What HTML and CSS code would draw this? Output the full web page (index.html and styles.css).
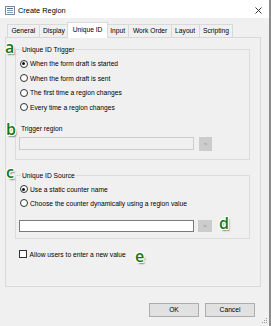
FILE: index.html
```html
<!DOCTYPE html>
<html>
<head>
<meta charset="utf-8">
<link rel="stylesheet" href="styles.css">
</head>
<body>
<div class="window">
  <div class="titlebar">
    <svg class="app-icon" width="10" height="9" viewBox="0 0 10 9">
      <rect x="0.5" y="0.5" width="9" height="8" fill="#fff" stroke="#7a8aa0"/>
      <line x1="2" y1="2.5" x2="8" y2="2.5" stroke="#4a6fa5"/>
      <line x1="2" y1="4.5" x2="8" y2="4.5" stroke="#8aa0c0"/>
      <line x1="2" y1="6.5" x2="8" y2="6.5" stroke="#8aa0c0"/>
    </svg>
    <span class="title">Create Region</span>
    <svg class="close" width="7" height="7" viewBox="0 0 7 7">
      <path d="M0.5 0.5 L6.5 6.5 M6.5 0.5 L0.5 6.5" stroke="#222" stroke-width="0.9" fill="none"/>
    </svg>
  </div>

  <div class="tabs">
    <div class="tab">General</div>
    <div class="tab">Display</div>
    <div class="tab active">Unique ID</div>
    <div class="tab">Input</div>
    <div class="tab">Work Order</div>
    <div class="tab">Layout</div>
    <div class="tab">Scripting</div>
  </div>

  <div class="panel">
    <div class="group group-trigger">
      <span class="legend">Unique ID Trigger</span>
      <div class="option"><span class="radio checked"></span>When the form draft is started</div>
      <div class="option"><span class="radio"></span>When the form draft is sent</div>
      <div class="option"><span class="radio"></span>The first time a region changes</div>
      <div class="option"><span class="radio"></span>Every time a region changes</div>
      <div class="field-label">Trigger region</div>
      <div class="field-row">
        <div class="textbox disabled"></div>
        <div class="pick">&gt;</div>
      </div>
    </div>

    <div class="group group-source">
      <span class="legend">Unique ID Source</span>
      <div class="option"><span class="radio checked"></span>Use a static counter name</div>
      <div class="option"><span class="radio"></span>Choose the counter dynamically using a region value</div>
      <div class="field-row source-row">
        <div class="textbox"></div>
        <div class="pick">&gt;</div>
      </div>
    </div>

    <div class="option check-row"><span class="checkbox"></span>Allow users to enter a new value</div>
  </div>

  <div class="footer">
    <div class="btn">OK</div>
    <div class="btn">Cancel</div>
  </div>

  <svg class="grip" width="6" height="6" viewBox="0 0 6 6">
    <rect x="4" y="0" width="1" height="1" fill="#999"/>
    <rect x="2" y="2" width="1" height="1" fill="#999"/>
    <rect x="4" y="2" width="1" height="1" fill="#999"/>
    <rect x="0" y="4" width="1" height="1" fill="#999"/>
    <rect x="2" y="4" width="1" height="1" fill="#999"/>
    <rect x="4" y="4" width="1" height="1" fill="#999"/>
  </svg>

  <span class="badge badge-a">a</span>
  <span class="badge badge-b">b</span>
  <span class="badge badge-c">c</span>
  <span class="badge badge-d">d</span>
  <span class="badge badge-e">e</span>
</div>
</body>
</html>
```

FILE: styles.css
```css
* { box-sizing: border-box; }
html, body { margin: 0; padding: 0; background: #f0f0f0; }
body { font-family: "Liberation Sans", Arial, sans-serif; font-size: 6.7px; color: #000; }

.window {
  position: relative;
  width: 271px;
  height: 326px;
  background: #f0f0f0;
  overflow: hidden;
  border-right: 2px solid #8c8c8c;
}

.titlebar {
  height: 18px;
  background: #fff;
  display: flex;
  align-items: center;
  padding-left: 5px;
  padding-right: 7px;
}
.app-icon { display: block; margin-top: 2px; }
.title { font-size: 7.4px; margin-left: 3px; margin-top: 2px; color: #000; }
.close { margin-left: auto; margin-top: 2px; }

.tabs {
  display: flex;
  align-items: flex-end;
  height: 15px;
  margin-top: 4px;
  padding-left: 7px;
  position: relative;
  z-index: 1;
}
.tab {
  height: 13px;
  padding: 0 3.4px;
  line-height: 12px;
  border: 1px solid #d9d9d9;
  border-bottom: none;
  margin-right: -1px;
  background: #f0f0f0;
  white-space: nowrap;
}
.tab.active {
  height: 16px;
  margin-bottom: -1px;
  line-height: 14px;
  background: #fff;
  margin-left: -1px;
  margin-right: -2px;
  padding: 0 4.4px;
  position: relative;
  z-index: 2;
}

.panel {
  margin-left: 5px;
  width: 256px;
  height: 250px;
  border: 1px solid #d9d9d9;
  background: #f0f0f0;
  padding: 11px 10px 0 9px;
}

.group {
  position: relative;
  border: 1px solid #dcdcdc;
  padding-left: 3px;
}
.group-trigger { height: 111px; padding-top: 6.5px; }
.group-source { height: 64px; margin-top: 15px; padding-top: 6px; }

.legend {
  position: absolute;
  left: 5px;
  top: -4px;
  padding: 0 1px;
  background: #f0f0f0;
  line-height: 7px;
}

.option {
  display: flex;
  align-items: center;
  height: 14.5px;
  white-space: nowrap;
}
.group-source .option { height: 14px; }

.radio {
  width: 8px;
  height: 8px;
  border: 1px solid #333;
  border-radius: 50%;
  background: #fff;
  margin-right: 2.5px;
  margin-left: 0.5px;
  position: relative;
  flex: none;
}
.radio.checked::after {
  content: "";
  position: absolute;
  left: 1.5px;
  top: 1.5px;
  width: 3px;
  height: 3px;
  border-radius: 50%;
  background: #111;
}

.field-label {
  margin-top: 10px;
  margin-left: 2px;
  height: 8px;
  line-height: 8px;
}
.field-row {
  display: flex;
  align-items: flex-start;
  margin-top: 4.5px;
  gap: 5px;
}
.source-row { margin-top: 10px; gap: 4px; }

.textbox {
  width: 175px;
  height: 13px;
  border: 1px solid #7a7a7a;
  background: #fff;
}
.textbox.disabled {
  border-color: #cccccc;
  background: #f0f0f0;
}
.source-row .textbox { height: 12px; }

.pick {
  width: 13px;
  height: 14px;
  background: #cccccc;
  color: #8a8a8a;
  font-size: 6px;
  line-height: 14px;
  text-align: center;
}
.source-row .pick { width: 14px; height: 12px; line-height: 12px; }

.check-row { margin-top: 11px; margin-left: 4px; height: 8px; }
.checkbox {
  width: 8px;
  height: 8px;
  border: 1px solid #333;
  background: #fff;
  margin-right: 2.5px;
  flex: none;
}

.footer {
  display: flex;
  justify-content: flex-end;
  gap: 6px;
  padding-right: 14px;
  margin-top: 16px;
}
.btn {
  width: 50px;
  height: 14px;
  border: 1px solid #adadad;
  background: #e1e1e1;
  text-align: center;
  line-height: 12px;
}

.grip { position: absolute; right: 1px; bottom: 2px; }

.badge {
  position: absolute;
  font-family: "Open Sans", "DejaVu Sans", sans-serif;
  font-weight: 600;
  font-size: 16px;
  line-height: 14px;
  color: #16781a;
  text-shadow:
    1px 0 0 #fff, -1px 0 0 #fff, 0 1px 0 #fff, 0 -1px 0 #fff,
    1px 1px 0 #fff, -1px -1px 0 #fff, 1px -1px 0 #fff, -1px 1px 0 #fff,
    1.5px 2px 1.5px rgba(0,0,0,0.5);
}
.badge-a { left: 5px; top: 40px; }
.badge-b { left: 6px; top: 122px; }
.badge-c { left: 6px; top: 165px; }
.badge-d { left: 219px; top: 216px; }
.badge-e { left: 135px; top: 249px; }
```
